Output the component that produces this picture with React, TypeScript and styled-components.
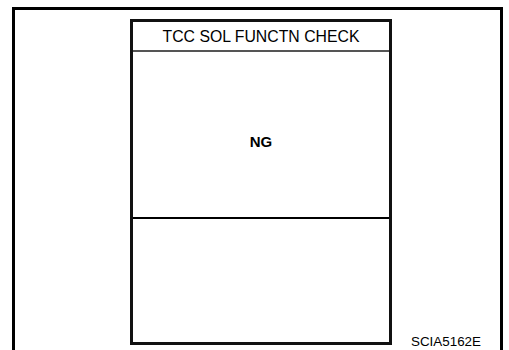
import React from "react";
import styled, { createGlobalStyle } from "styled-components";

const GlobalStyle = createGlobalStyle`
  html, body {
    margin: 0;
    padding: 0;
    background: #fff;
  }
  body {
    font-family: "Liberation Sans", Arial, sans-serif;
    color: #000;
  }
`;

const Page = styled.div`
  box-sizing: border-box;
  height: 350px;
  padding: 7px 6px 0 12px;
  overflow: hidden;
`;

const Frame = styled.div`
  box-sizing: border-box;
  height: 100%;
  border: 3px solid #000;
  border-bottom: none;
  padding: 9px 0 0 115px;
  display: flex;
  align-items: flex-start;
`;

const Screen = styled.div`
  box-sizing: border-box;
  width: 262px;
  height: 326px;
  border: 3px solid #111;
  display: flex;
  flex-direction: column;
  flex-shrink: 0;
`;

const Header = styled.div`
  height: 27px;
  border-bottom: 2px solid #555;
  display: flex;
  align-items: center;
  justify-content: center;
  font-size: 15.8px;
  padding-top: 1px;
`;

const Result = styled.div`
  box-sizing: border-box;
  height: 167px;
  border-bottom: 2px solid #000;
  display: flex;
  align-items: center;
  justify-content: center;
  font-size: 15px;
  font-weight: bold;
  padding-top: 13px;
`;

const Blank = styled.div`
  flex: 1;
`;

const Caption = styled.div`
  align-self: flex-end;
  margin-left: auto;
  margin-right: 19px;
  font-size: 13.4px;
  line-height: 14px;
  margin-bottom: 1px;
`;

const App: React.FC = () => {
  return (
    <>
      <GlobalStyle />
      <Page>
        <Frame>
          <Screen>
            <Header>TCC SOL FUNCTN CHECK</Header>
            <Result>NG</Result>
            <Blank />
          </Screen>
          <Caption>SCIA5162E</Caption>
        </Frame>
      </Page>
    </>
  );
};

export default App;
